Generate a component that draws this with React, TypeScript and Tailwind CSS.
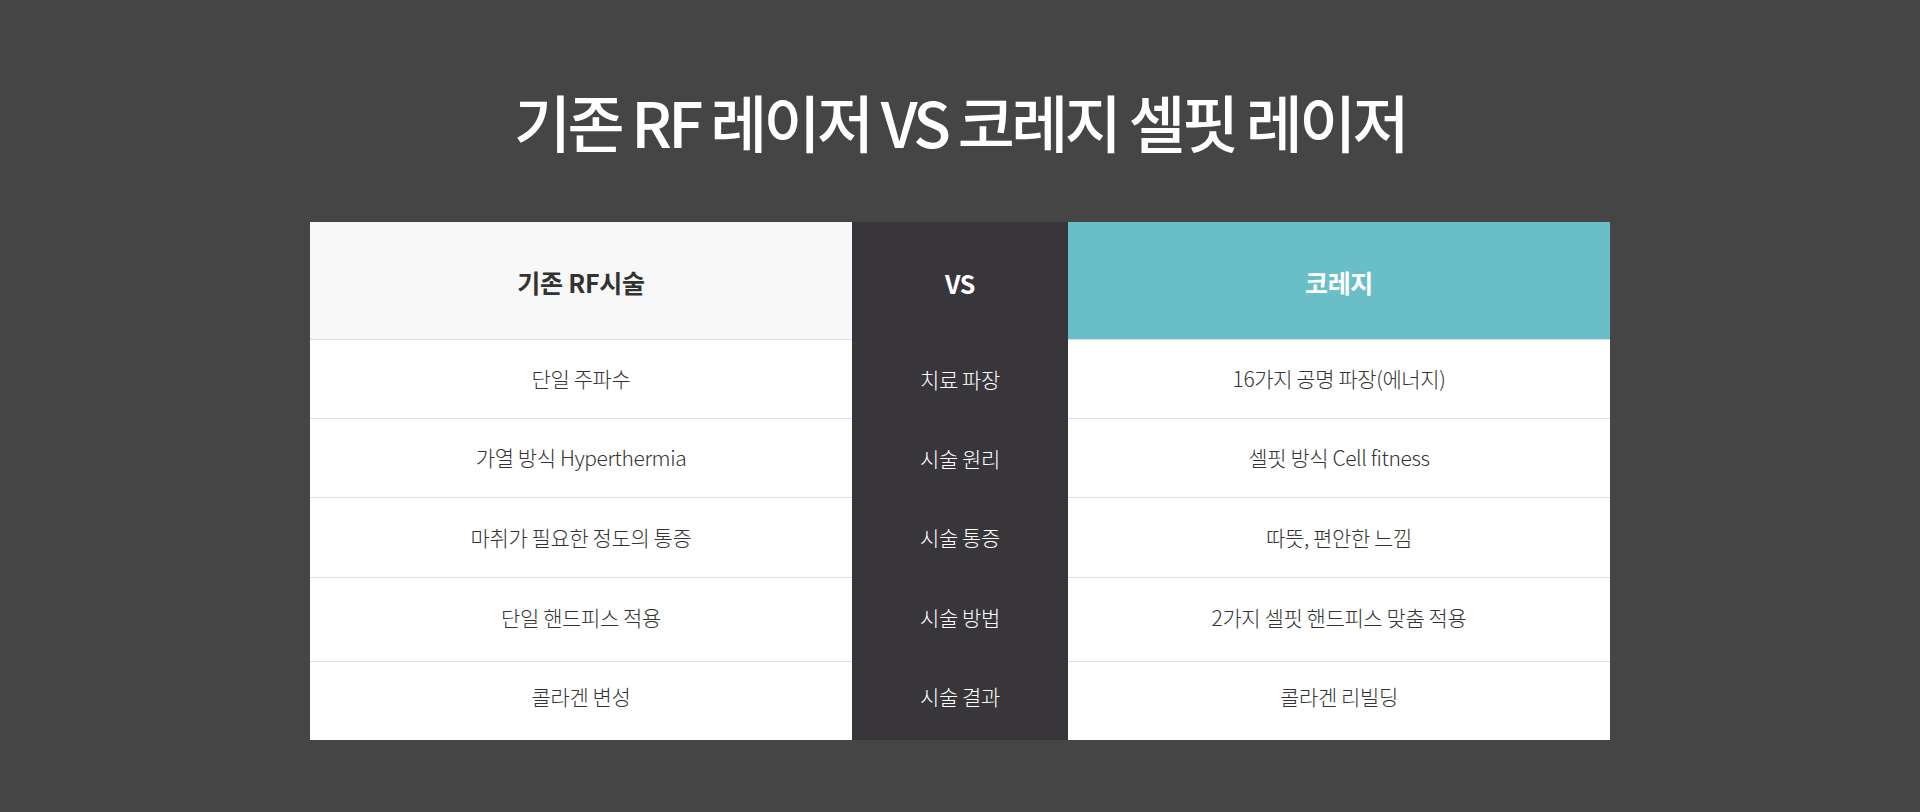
import React from 'react';

const rows = [
  { left: '단일 주파수', mid: '치료 파장', right: '16가지 공명 파장(에너지)', h: 'h-[79px]' },
  { left: '가열 방식 Hyperthermia', mid: '시술 원리', right: '셀핏 방식 Cell fitness', h: 'h-[79px]' },
  { left: '마취가 필요한 정도의 통증', mid: '시술 통증', right: '따뜻, 편안한 느낌', h: 'h-[80px]' },
  { left: '단일 핸드피스 적용', mid: '시술 방법', right: '2가지 셀핏 핸드피스 맞춤 적용', h: 'h-[84px] pb-[4px]' },
  { left: '콜라겐 변성', mid: '시술 결과', right: '콜라겐 리빌딩', h: 'h-[78px] pb-[8px]' },
];

export default function App() {
  return (
    <div className="min-h-[812px] w-full bg-[#454545] pt-[90px] pb-[72px] font-['Noto_Sans_CJK_KR','Noto_Sans',sans-serif]">
      <h1 className="text-center text-[62px] leading-[62px] font-medium tracking-[-3.6px] text-white">
        기존 RF 레이저 VS 코레지 셀핏 레이저
      </h1>

      <div className="mx-auto mt-[70px] grid w-[1300px] grid-cols-[542px_216px_542px]">
        {/* header */}
        <div className="flex h-[118px] items-center justify-center border-b border-[#dddddd] bg-[#f8f8f8] pt-[5px] text-[25px] font-bold tracking-[-0.3px] text-[#333333]">
          기존 RF시술
        </div>
        <div className="flex h-[118px] items-center justify-center bg-[#38363a] pt-[5px] text-[25px] font-bold tracking-[-0.3px] text-white">
          VS
        </div>
        <div className="flex h-[118px] items-center justify-center border-b border-[#dddddd] bg-[#6abec7] pt-[5px] text-[25px] font-bold tracking-[-0.3px] text-white">
          코레지
        </div>

        {rows.map((r, i) => {
          const last = i === rows.length - 1;
          return (
            <React.Fragment key={r.mid}>
              <div
                className={`flex ${r.h} items-center justify-center bg-white text-[21px] font-light tracking-[-0.4px] text-[#333333] ${
                  last ? '' : 'border-b border-[#dddddd]'
                }`}
              >
                {r.left}
              </div>
              <div className={`flex ${r.h} items-center justify-center bg-[#38363a] text-[21px] font-light tracking-[-0.4px] text-white`}>
                {r.mid}
              </div>
              <div
                className={`flex ${r.h} items-center justify-center bg-white text-[21px] font-light tracking-[-0.4px] text-[#333333] ${
                  last ? '' : 'border-b border-[#dddddd]'
                }`}
              >
                {r.right}
              </div>
            </React.Fragment>
          );
        })}
      </div>
    </div>
  );
}
